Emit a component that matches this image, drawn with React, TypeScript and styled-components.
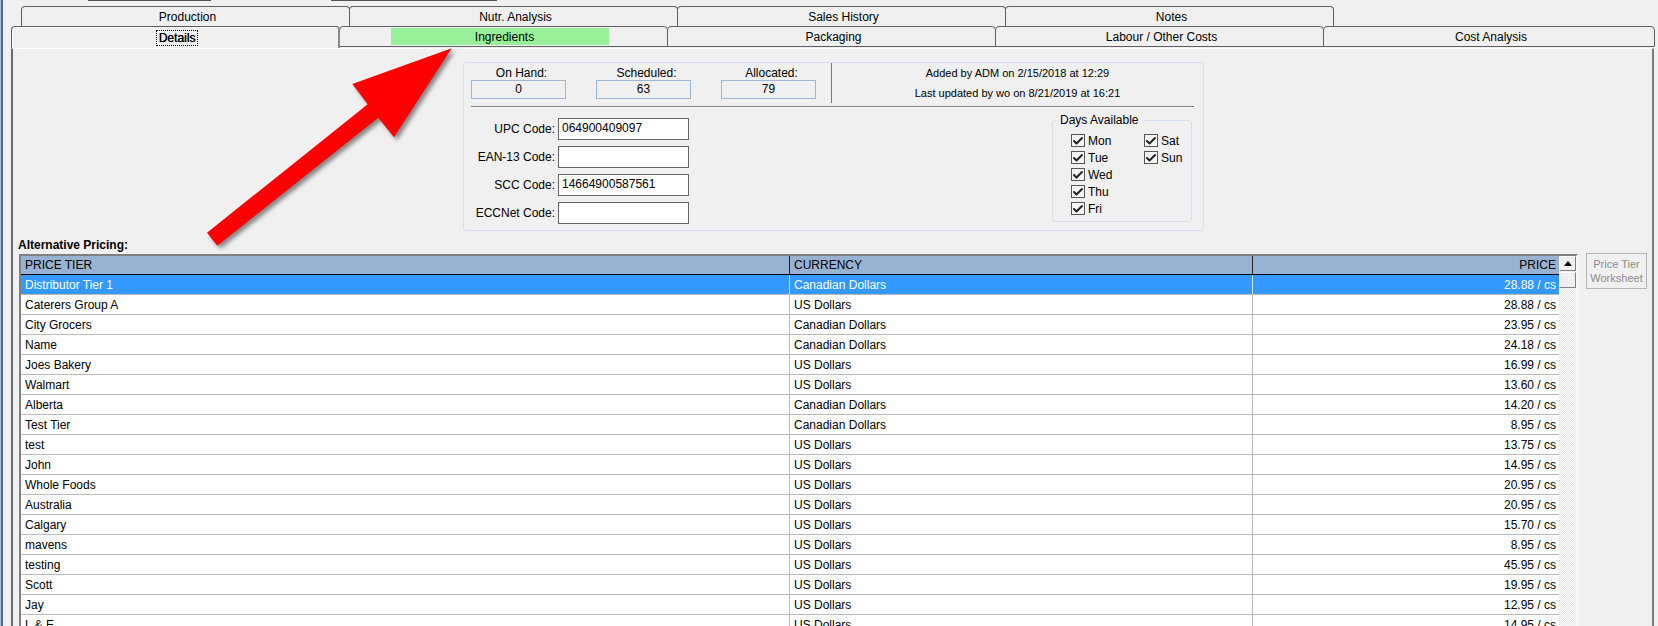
import React from 'react';
import styled, { createGlobalStyle } from 'styled-components';
import { Check } from 'lucide-react';

const GlobalStyle = createGlobalStyle`
  html, body {
    margin: 0;
    padding: 0;
    background: #f0f0f0;
    overflow: hidden;
  }
  * {
    box-sizing: border-box;
  }
`;

const Frame = styled.div`
  position: relative;
  display: flex;
  width: 1658px;
  height: 626px;
  overflow: hidden;
  background: #f0f0f0;
  color: #000;
  font-family: "Liberation Sans", Arial, sans-serif;
  font-size: 12px;
`;

const WindowEdge = styled.div`
  flex: 0 0 3px;
  background: linear-gradient(90deg, #a9c1da 0 1px, #4f6c91 1px);
`;

const Content = styled.div`
  flex: 1;
  display: flex;
  flex-direction: column;
  padding-left: 8px;
  min-width: 0;
`;

const StubRow = styled.div`
  flex: 0 0 6px;
  display: flex;
  padding-left: 77px;
  gap: 120px;
`;

const Stub = styled.div<{ $width: number }>`
  width: ${p => p.$width}px;
  height: 1px;
  background: #555;
`;

const TabRow = styled.div<{ $indent: number; $width: number; $height: number }>`
  flex: 0 0 ${p => p.$height}px;
  display: flex;
  align-items: flex-start;
  margin-left: ${p => p.$indent}px;
  width: ${p => p.$width}px;
`;

const Tab = styled.div<{ $active?: boolean; $upper?: boolean }>`
  position: relative;
  z-index: ${p => (p.$active ? 2 : 1)};
  flex: 0 0 329px;
  height: ${p => (p.$active ? '22px' : p.$upper ? '20px' : '21px')};
  margin-right: -1px;
  display: flex;
  align-items: ${p => (p.$active ? 'flex-start' : 'center')};
  justify-content: center;
  padding-left: 4px;
  padding-top: ${p => (p.$active ? '3px' : '0')};
  background: #f0f0f0;
  border: 1px solid #5f5f5f;
  border-bottom: ${p => (p.$active || p.$upper ? 'none' : '1px solid #5f5f5f')};
  border-right: ${p => (p.$active ? '2px solid #8a8a8a' : '1px solid #5f5f5f')};
  border-radius: 4px 4px 0 0;
  box-shadow: ${p => (p.$active ? 'inset 0 1px 0 #fff, inset 1px 0 0 #fff' : 'none')};

  &:last-child {
    flex: 1 1 0;
    margin-right: 0;
  }
`;

const FocusLabel = styled.span`
  padding: 0 2px;
  height: 16px;
  line-height: 14px;
  border: 1px dotted #000;
  text-shadow: 0.3px 0 0 #000;
`;

const HighlightLabel = styled.span`
  width: 218px;
  height: 17px;
  margin-left: -11px;
  padding-left: 9px;
  line-height: 18px;
  text-align: center;
  background: #98f198;
`;

const Panel = styled.div`
  flex: 1;
  width: 1643px;
  min-height: 0;
  display: flex;
  flex-direction: column;
  border-top: 1px solid #fff;
  border-left: 2px solid #6a6a6a;
  border-right: 2px solid #7a7a7a;
`;

const InfoCard = styled.div`
  width: 741px;
  height: 169px;
  margin: 13px 0 0 450px;
  padding: 0 0 0 7px;
  background: #f0f0f0;
  border: 1px solid #d5e0ec;
  border-radius: 3px;
`;

const InfoTop = styled.div`
  display: flex;
  height: 43px;
`;

const StatGroup = styled.div`
  display: flex;
  gap: 30px;
  flex: 0 0 360px;
`;

const Stat = styled.div`
  width: 95px;
  text-align: center;
`;

const StatLabel = styled.div`
  height: 17px;
  padding: 3px 0 0 6px;
  line-height: 14px;
`;

const StatValue = styled.div`
  height: 19px;
  line-height: 17px;
  border: 1px solid #9db7d3;
`;

const Audit = styled.div`
  flex: 1;
  display: flex;
  flex-direction: column;
  align-items: center;
  border-left: 1px solid #777;
  margin-bottom: 3px;
  font-size: 11px;
`;

const AuditLine = styled.div`
  height: 20px;
  line-height: 20px;
`;

const Rule = styled.div`
  width: 723px;
  height: 2px;
  border-top: 1px solid #808080;
  border-bottom: 1px solid #fff;
`;

const InfoBody = styled.div`
  display: flex;
  justify-content: space-between;
  width: 723px;
  padding: 10px 2px 0 0;
`;

const CodeGrid = styled.div`
  display: grid;
  grid-template-columns: 84px 131px;
  grid-auto-rows: 22px;
  column-gap: 3px;
  row-gap: 6px;
  align-items: center;
`;

const CodeLabel = styled.label`
  text-align: right;
`;

const CodeInput = styled.div`
  height: 22px;
  padding: 0 3px;
  line-height: 19px;
  background: #fff;
  border: 1px solid #666;
`;

const DaysBox = styled.fieldset`
  width: 140px;
  min-width: 0;
  height: 109px;
  margin: -5px 0 0;
  padding: 5px 0 0;
  border: 1px solid #d5e0ec;
  border-radius: 3px;
`;

const DaysLegend = styled.legend`
  margin-left: 4px;
  padding: 0 3px;
  line-height: 14px;
`;

const DaysGrid = styled.div`
  display: grid;
  grid-auto-flow: column;
  grid-template-rows: repeat(5, 17px);
  grid-template-columns: 73px 47px;
  margin-left: 18px;
`;

const DayItem = styled.div`
  display: flex;
  align-items: center;
  gap: 3px;
`;

const CheckBox = styled.span`
  flex: 0 0 13px;
  height: 13px;
  display: flex;
  align-items: center;
  justify-content: center;
  background: #f6f6f6;
  border: 1px solid #555;
  color: #222;
`;

const SectionLabel = styled.div`
  margin: 7px 0 0 5px;
  height: 16px;
  line-height: 14px;
  font-weight: 700;
`;

const PricingRow = styled.div`
  flex: 1;
  min-height: 0;
  display: flex;
  align-items: flex-start;
  padding-left: 6px;
`;

const TableFrame = styled.div`
  flex: 0 0 1559px;
  height: 400px;
  display: flex;
  background: #fff;
  border-style: solid;
  border-width: 2px;
  border-color: #808080 #f8f8f8 #808080 #808080;
  overflow: hidden;
`;

const PriceTable = styled.table`
  width: 1538px;
  table-layout: fixed;
  border-collapse: separate;
  border-spacing: 0;
  align-self: flex-start;
`;

const HeadCell = styled.th<{ $right?: boolean }>`
  height: 19px;
  padding: 0 3px 0 ${p => (p.$right ? '3px' : '4px')};
  font-weight: 400;
  text-align: ${p => (p.$right ? 'right' : 'left')};
  background: #98b3d1;
  border-bottom: 1px solid #000;
  border-right: 1px solid #222;
  &:last-child {
    border-right: none;
  }
`;

const BodyCell = styled.td<{ $right?: boolean; $selected?: boolean }>`
  height: 20px;
  padding: 0 3px 0 ${p => (p.$right ? '3px' : '4px')};
  text-align: ${p => (p.$right ? 'right' : 'left')};
  color: ${p => (p.$selected ? '#fff' : '#000')};
  background: ${p => (p.$selected ? '#3399ff' : '#fff')};
  border-bottom: 1px solid #bbb;
  border-right: 1px solid ${p => (p.$selected ? '#cfe4fb' : '#bbb')};
  &:last-child {
    border-right: none;
  }
`;

const ScrollBar = styled.div`
  flex: 0 0 17px;
  display: flex;
  flex-direction: column;
  background: repeating-conic-gradient(#fff 0 25%, #e6e6e6 0 50%) 0 0 / 2px 2px;
`;

const ScrollButton = styled.div`
  height: 15px;
  display: flex;
  align-items: center;
  justify-content: center;
  background: #f0f0f0;
  border: 1px solid #808080;
  border-top-color: #fff;
  border-left-color: #fff;
`;

const ScrollArrow = styled.span`
  width: 0;
  height: 0;
  border-left: 4px solid transparent;
  border-right: 4px solid transparent;
  border-bottom: 5px solid #000;
`;

const ScrollThumb = styled(ScrollButton)`
  height: 16px;
  margin-top: 1px;
`;

const WorksheetButton = styled.div`
  flex: 0 0 61px;
  height: 36px;
  margin: -1px 0 0 8px;
  display: flex;
  align-items: center;
  justify-content: center;
  text-align: center;
  font-size: 11px;
  line-height: 14px;
  color: #8c8c8c;
  border: 1px solid #b4b4b4;
`;

const ArrowOverlay = styled.svg`
  position: absolute;
  left: 200px;
  top: 44px;
  width: 260px;
  height: 210px;
  overflow: visible;
  filter: drop-shadow(3px 3px 2px rgba(0, 0, 0, 0.45));
`;

const topTabs = ['Production', 'Nutr. Analysis', 'Sales History', 'Notes'];
const lowerTabs = ['Packaging', 'Labour / Other Costs', 'Cost Analysis'];

const stats = [
  { label: 'On Hand:', value: '0' },
  { label: 'Scheduled:', value: '63' },
  { label: 'Allocated:', value: '79' },
];

const codes = [
  { label: 'UPC Code:', value: '064900409097' },
  { label: 'EAN-13 Code:', value: '' },
  { label: 'SCC Code:', value: '14664900587561' },
  { label: 'ECCNet Code:', value: '' },
];

const days = ['Mon', 'Tue', 'Wed', 'Thu', 'Fri', 'Sat', 'Sun'];

const CAD = 'Canadian Dollars';
const USD = 'US Dollars';

const tiers = [
  ['Distributor Tier 1', CAD, '28.88 / cs'],
  ['Caterers Group A', USD, '28.88 / cs'],
  ['City Grocers', CAD, '23.95 / cs'],
  ['Name', CAD, '24.18 / cs'],
  ['Joes Bakery', USD, '16.99 / cs'],
  ['Walmart', USD, '13.60 / cs'],
  ['Alberta', CAD, '14.20 / cs'],
  ['Test Tier', CAD, '8.95 / cs'],
  ['test', USD, '13.75 / cs'],
  ['John', USD, '14.95 / cs'],
  ['Whole Foods', USD, '20.95 / cs'],
  ['Australia', USD, '20.95 / cs'],
  ['Calgary', USD, '15.70 / cs'],
  ['mavens', USD, '8.95 / cs'],
  ['testing', USD, '45.95 / cs'],
  ['Scott', USD, '19.95 / cs'],
  ['Jay', USD, '12.95 / cs'],
  ['L & E', USD, '14.95 / cs'],
];

const App: React.FC = () => {
  return (
    <Frame>
      <GlobalStyle />
      <WindowEdge />
      <Content>
        <StubRow>
          <Stub $width={123} />
          <Stub $width={166} />
        </StubRow>

        <TabRow $indent={10} $width={1313} $height={20}>
          {topTabs.map(name => (
            <Tab $upper key={name}>{name}</Tab>
          ))}
        </TabRow>

        <TabRow $indent={0} $width={1644} $height={21}>
          <Tab $active>
            <FocusLabel>Details</FocusLabel>
          </Tab>
          <Tab>
            <HighlightLabel>Ingredients</HighlightLabel>
          </Tab>
          {lowerTabs.map(name => (
            <Tab key={name}>{name}</Tab>
          ))}
        </TabRow>

        <Panel>
          <InfoCard>
            <InfoTop>
              <StatGroup>
                {stats.map(s => (
                  <Stat key={s.label}>
                    <StatLabel>{s.label}</StatLabel>
                    <StatValue>{s.value}</StatValue>
                  </Stat>
                ))}
              </StatGroup>
              <Audit>
                <AuditLine>Added by ADM on 2/15/2018 at 12:29</AuditLine>
                <AuditLine>Last updated by wo on 8/21/2019 at 16:21</AuditLine>
              </Audit>
            </InfoTop>
            <Rule />
            <InfoBody>
              <CodeGrid>
                {codes.map(c => (
                  <React.Fragment key={c.label}>
                    <CodeLabel>{c.label}</CodeLabel>
                    <CodeInput>{c.value}</CodeInput>
                  </React.Fragment>
                ))}
              </CodeGrid>
              <DaysBox>
                <DaysLegend>Days Available</DaysLegend>
                <DaysGrid>
                  {days.map(day => (
                    <DayItem key={day}>
                      <CheckBox>
                        <Check size={12} strokeWidth={4} />
                      </CheckBox>
                      {day}
                    </DayItem>
                  ))}
                </DaysGrid>
              </DaysBox>
            </InfoBody>
          </InfoCard>

          <SectionLabel>Alternative Pricing:</SectionLabel>

          <PricingRow>
            <TableFrame>
              <PriceTable>
                <colgroup>
                  <col style={{ width: 769 }} />
                  <col style={{ width: 463 }} />
                  <col style={{ width: 306 }} />
                </colgroup>
                <thead>
                  <tr>
                    <HeadCell>PRICE TIER</HeadCell>
                    <HeadCell>CURRENCY</HeadCell>
                    <HeadCell $right>PRICE</HeadCell>
                  </tr>
                </thead>
                <tbody>
                  {tiers.map(([tier, currency, price], i) => (
                    <tr key={tier}>
                      <BodyCell $selected={i === 0}>{tier}</BodyCell>
                      <BodyCell $selected={i === 0}>{currency}</BodyCell>
                      <BodyCell $selected={i === 0} $right>{price}</BodyCell>
                    </tr>
                  ))}
                </tbody>
              </PriceTable>
              <ScrollBar>
                <ScrollButton>
                  <ScrollArrow />
                </ScrollButton>
                <ScrollThumb />
              </ScrollBar>
            </TableFrame>
            <WorksheetButton>
              Price Tier
              <br />
              Worksheet
            </WorksheetButton>
          </PricingRow>
        </Panel>
      </Content>

      <ArrowOverlay viewBox="200 44 260 210">
        <polygon
          fill="#ff0000"
          points="451.7,48.3 352.3,84 367.7,104.3 207,232.7 217.3,245.7 378.3,117.7 394,137.3"
        />
      </ArrowOverlay>
    </Frame>
  );
};

export default App;
